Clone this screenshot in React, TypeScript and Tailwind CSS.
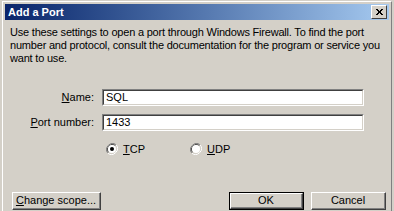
import React from 'react';

const font = { fontFamily: '"Liberation Sans", Arial, sans-serif' };

function Radio({ checked }: { checked?: boolean }) {
  return (
    <svg width="12" height="12" viewBox="0 0 12 12" className="shrink-0">
      <path d="M10.2 1.8 A6 6 0 0 0 1.8 10.2" fill="none" stroke="#808080" strokeWidth="1" />
      <path d="M9.5 2.5 A5 5 0 0 0 2.5 9.5" fill="none" stroke="#404040" strokeWidth="1" />
      <path d="M1.8 10.2 A6 6 0 0 0 10.2 1.8" fill="none" stroke="#ffffff" strokeWidth="1" />
      <path d="M2.5 9.5 A5 5 0 0 0 9.5 2.5" fill="none" stroke="#d4d0c8" strokeWidth="1" />
      <circle cx="6" cy="6" r="4" fill="#ffffff" />
      {checked && <circle cx="6" cy="6" r="2" fill="#000000" />}
    </svg>
  );
}

function WinButton({ children, isDefault, className }: { children: React.ReactNode; isDefault?: boolean; className: string }) {
  return (
    <div className={`${className} ${isDefault ? 'border border-black' : ''} h-[18px]`}>
      <div className="h-full w-full border-t border-l border-white border-r border-b border-r-[#404040] border-b-[#404040] bg-[#d4d0c8]">
        <div className="flex h-full w-full items-center justify-center border-r border-b border-[#808080] text-[11px] text-black">
          {children}
        </div>
      </div>
    </div>
  );
}

function Field({ value }: { value: string }) {
  return (
    <div className="h-[17px] w-[262px] border-t border-l border-[#808080] border-r border-b border-r-white border-b-white">
      <div className="flex h-full w-full items-center border-t border-l border-[#404040] border-r border-b border-r-[#d4d0c8] border-b-[#d4d0c8] bg-white pl-[2px] text-[11px] text-black">
        {value}
      </div>
    </div>
  );
}

export default function App() {
  return (
    <div className="h-[211px] w-[394px] overflow-hidden bg-[#d4d0c8] pl-[2px] pt-[1px]" style={font}>
      <div className="flex h-[215px] w-[390px] flex-col border-l border-t border-white border-r border-r-[#808080] pl-[2px] pr-[2px] pt-[2px]">
        {/* title bar */}
        <div className="flex h-[16px] items-center justify-between bg-gradient-to-r from-[#0a246a] to-[#a6caf0] pl-[3px] pr-[2px]">
          <span className="text-[11px] font-bold text-white">Add a Port</span>
          <div className="h-[14px] w-[16px] border-t border-l border-white border-r border-b border-r-[#404040] border-b-[#404040] bg-[#d4d0c8]">
            <svg width="14" height="12" viewBox="0 0 14 12">
              <path d="M4 3 L10 9 M5 3 L11 9 M10 3 L4 9 M11 3 L5 9" stroke="#000" strokeWidth="1" />
            </svg>
          </div>
        </div>

        <p className="mt-[6px] pl-[5px] pr-[8px] text-[11px] leading-[13px] tracking-[-0.2px] text-black">
          Use these settings to open a port through Windows Firewall. To find the port number and protocol, consult the documentation for the program or service you want to use.
        </p>

        <div className="mt-[24px] grid grid-cols-[89px_262px] items-center gap-x-[8px] gap-y-[8px] text-[11px] text-black">
          <span className="text-right">
            <span className="underline">N</span>ame:
          </span>
          <Field value="SQL" />
          <span className="text-right">
            <span className="underline">P</span>ort number:
          </span>
          <Field value="1433" />
        </div>

        <div className="mt-[10px] flex items-center pl-[101px] text-[11px] text-black">
          <Radio checked />
          <span className="ml-[5px] w-[67px]">
            <span className="underline">T</span>CP
          </span>
          <Radio />
          <span className="ml-[5px]">
            <span className="underline">U</span>DP
          </span>
        </div>

        <div className="mt-[34px] flex pl-[7px]">
          <WinButton className="w-[89px]">
            <span>
              <span className="underline">C</span>hange scope...
            </span>
          </WinButton>
          <WinButton isDefault className="ml-[128px] w-[75px]">
            OK
          </WinButton>
          <WinButton className="ml-[7px] w-[75px]">Cancel</WinButton>
        </div>
      </div>
    </div>
  );
}
